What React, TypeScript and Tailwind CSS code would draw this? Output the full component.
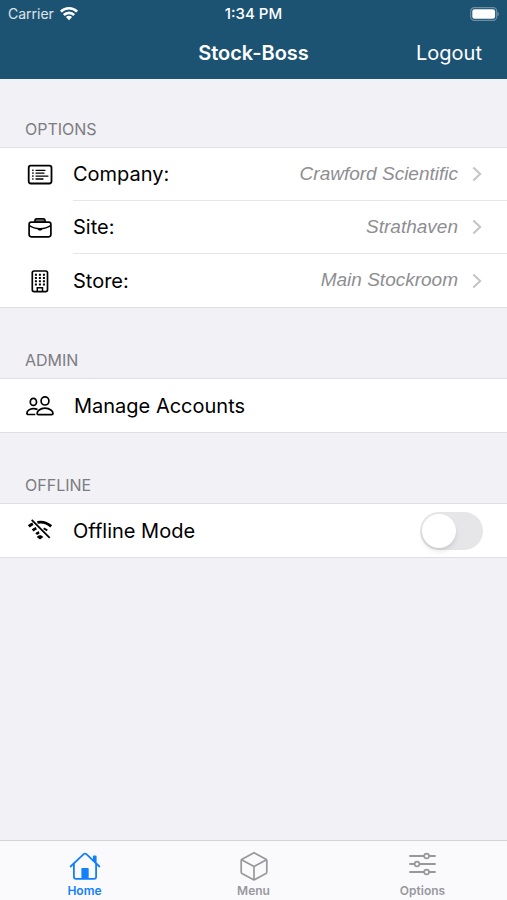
import { useState } from "react";
import type { ReactNode } from "react";

type Tab = "home" | "menu" | "options";

const locationRows = [
  { label: "Company:", value: "Crawford Scientific", icon: <ListIcon /> },
  { label: "Site:", value: "Strathaven", icon: <BriefcaseIcon /> },
  { label: "Store:", value: "Main Stockroom", icon: <BuildingIcon /> },
];

const tabs: { id: Tab; label: string; icon: ReactNode }[] = [
  { id: "home", label: "Home", icon: <HomeIcon /> },
  { id: "menu", label: "Menu", icon: <CubeIcon /> },
  { id: "options", label: "Options", icon: <SlidersIcon /> },
];

function WifiIcon() {
  return (
    <svg viewBox="0 0 18 14" className="w-[18px] h-3.5" fill="none" stroke="#fff" strokeWidth="2.6">
      <path d="M0.9 4.6a11.6 11.6 0 0 1 16.2 0" />
      <path d="M3.8 8a7.4 7.4 0 0 1 10.4 0" />
      <path d="M9 13.2 5.9 10.1a4.5 4.5 0 0 1 6.2 0z" fill="#fff" stroke="none" />
    </svg>
  );
}

function BatteryIcon() {
  return (
    <svg viewBox="0 0 30 14" className="w-[30px] h-3.5" fill="none">
      <rect x="1.7" y="0.7" width="26" height="12.6" rx="3.6" stroke="#fff" strokeOpacity="0.35" strokeWidth="1.2" />
      <rect x="3.3" y="2.3" width="22.8" height="9.4" rx="2.2" fill="#fff" />
      <path d="M28.600 4.900c1.400.5 1.400 3.700 0 4.200z" fill="#fff" fillOpacity="0.45" />
    </svg>
  );
}

function ListIcon() {
  return (
    <svg viewBox="0 0 28 28" className="w-7 h-7" fill="none" stroke="currentColor" strokeLinecap="round">
      <rect x="2.7" y="4.7" width="22.8" height="17.8" rx="2.2" strokeWidth="1.8" />
      <path d="M10 9.3h9M10 12.1h8M10 15.1h12M10 18h7" strokeWidth="1.3" />
      <path d="M6.8 9.3h.2M6.8 12.1h.2M6.8 15.1h.2M6.8 18h.2" strokeWidth="1.6" />
    </svg>
  );
}

function BriefcaseIcon() {
  return (
    <svg viewBox="0 0 28 28" className="w-7 h-7" fill="none" stroke="currentColor" strokeWidth="1.7" strokeLinejoin="round">
      <rect x="3.1" y="8.2" width="21.8" height="14.6" rx="2.2" />
      <path d="M9 8V6.6c0-1 .7-1.7 1.7-1.7h6.6c1 0 1.7.7 1.7 1.7V8" />
      <path d="M9.5 7h9" strokeWidth="1.2" />
      <path d="M3.4 11.6c2.6 1.8 6 3 10.6 3s8-1.2 10.6-3" strokeWidth="1.4" />
      <path d="M11.3 14.3h5.4c-.2 1.4-1.3 2.3-2.7 2.3s-2.5-.9-2.7-2.3z" fill="currentColor" stroke="none" />
    </svg>
  );
}

function BuildingIcon() {
  return (
    <svg viewBox="0 0 28 28" className="w-7 h-7" fill="none" stroke="currentColor">
      <rect x="6.3" y="4" width="15.2" height="20.6" rx="1.8" strokeWidth="1.7" />
      <path
        d="M8.9 7.8h2M12.9 7.8h2M16.9 7.8h2M8.9 11h2M12.9 11h2M16.9 11h2M8.9 14.2h2M12.9 14.2h2M16.9 14.2h2M8.9 17.4h2M12.9 17.4h2M16.9 17.4h2"
        strokeWidth="2"
      />
      <path d="M11.3 24.3v-3.6h5.2v3.6" strokeWidth="1.5" />
    </svg>
  );
}

function PeopleIcon() {
  return (
    <svg viewBox="0 0 28 28" className="w-7 h-7" fill="none" stroke="currentColor" strokeWidth="1.7" strokeLinejoin="round">
      <ellipse cx="19" cy="8.9" rx="3.9" ry="4.1" />
      <path d="M12.5 22.7c-.9 0-1.4-.5-1.4-1.3 0-2.2 2.9-5.2 7.9-5.2s8 3 8 5.2c0 .8-.5 1.3-1.4 1.3z" />
      <ellipse cx="7.4" cy="9.9" rx="3.1" ry="3.5" />
      <path d="M9.3 22.5H2.2c-.9 0-1.3-.5-1.3-1.3 0-2 2.5-4.6 6.5-4.6 1.7 0 3 .4 4.1 1" />
    </svg>
  );
}

function WifiOffIcon() {
  return (
    <svg viewBox="0 0 28 28" className="w-7 h-7" fill="none" stroke="currentColor">
      <path d="M11.4 5.4c5-1 10 .5 13.8 4" strokeWidth="2.8" />
      <path d="M2.8 9.4c1.3-1.2 2.6-2 4.1-2.7" strokeWidth="2.8" />
      <path d="M6.7 13.6c1.1-1.1 2.3-1.9 3.7-2.4" strokeWidth="2.8" />
      <path d="M17.6 11.4c1.4.5 2.500 1.200 3.600 2.200" strokeWidth="2" />
      <path d="M10.2 17.1c.9-.9 1.9-1.4 3-1.6" strokeWidth="2.6" />
      <path d="M14 22.6l-3.200-2.700c1.800-2.200 4.600-2.200 6.400 0z" fill="currentColor" stroke="none" />
      <path d="M5.7 2.800 23.700 20.800" strokeWidth="1.8" />
    </svg>
  );
}

function HomeIcon() {
  return (
    <svg viewBox="0 0 32 30" className="w-8 h-[30px]" fill="none" stroke="currentColor" strokeWidth="1.8" strokeLinecap="round" strokeLinejoin="round">
      <path d="M1.600 15.500 14.700 3.200c.8-.8 1.900-.8 2.700 0l13 12.300" />
      <path d="M4.900 13v12.800c0 1.300.8 2.100 2.100 2.100h18c1.300 0 2.100-.8 2.100-2.100V13" />
      <path d="M24.800 8.500V5.400h1.900v5.500z" fill="currentColor" />
      <path d="M12.400 28V18.300c0-.8.4-1.200 1.200-1.200h4.900c.8 0 1.200.4 1.200 1.200V28z" fill="currentColor" stroke="none" />
    </svg>
  );
}

function CubeIcon() {
  return (
    <svg viewBox="0 0 32 30" className="w-8 h-[30px]" fill="none" stroke="currentColor" strokeWidth="1.7" strokeLinejoin="round">
      <path d="M16 1.700 28 8.200c.5.300.8.700.8 1.300v11.500c0 .6-.3 1.100-.8 1.400L16 28.900 4 22.400c-.5-.3-.8-.8-.8-1.400V9.500c0-.6.3-1 .8-1.300z" />
      <path d="M3.500 8.700 16 15.500l12.500-6.800M16 15.500v13.300" />
    </svg>
  );
}

function SlidersIcon() {
  return (
    <svg viewBox="0 0 32 30" className="w-8 h-[30px]" fill="none" stroke="currentColor" strokeWidth="1.8" strokeLinecap="round">
      <path d="M3 5h14M22 5h6M3 13h4.500M12.500 13H28M3 21h14M22 21h6" />
      <circle cx="19.600" cy="5" r="2.400" strokeWidth="1.600" />
      <circle cx="10" cy="13" r="2.400" strokeWidth="1.600" />
      <circle cx="19.600" cy="21" r="2.400" strokeWidth="1.600" />
    </svg>
  );
}

function Chevron() {
  return (
    <svg viewBox="0 0 10 16" className="w-2.5 h-4 text-[#c4c4c7]" fill="none" stroke="currentColor" strokeWidth="2">
      <path d="M1.300 1.500 8.200 8l-6.900 6.500" />
    </svg>
  );
}

function Section({ title, children }: { title: string; children: ReactNode }) {
  return (
    <section>
      <h2 className="pt-10 pb-2 px-[25px] text-base leading-5 text-[#7c7c81]">{title}</h2>
      <div className="bg-white border-y border-[#dfdfe3]">{children}</div>
    </section>
  );
}

export default function App() {
  const [activeTab, setActiveTab] = useState<Tab>("home");
  const [offline, setOffline] = useState(false);

  return (
    <div className="min-h-screen flex flex-col bg-[#f1f1f6] text-black font-['Inter',sans-serif]">
      <header className="bg-[#1c5373] text-white">
        {/* Status bar */}
        <div className="h-7 grid grid-cols-3 items-center px-2 text-sm">
          <div className="flex items-center gap-1.5 text-white/85">
            Carrier
            <WifiIcon />
          </div>
          <div className="text-center text-[15px] font-medium">1:34 PM</div>
          <div className="flex justify-end">
            <BatteryIcon />
          </div>
        </div>
        <div className="h-[51px] grid grid-cols-3 items-center px-[25px] pb-0.5 text-xl">
          <h1 className="col-start-2 text-center font-semibold whitespace-nowrap">Stock-Boss</h1>
          <button className="justify-self-end">Logout</button>
        </div>
      </header>

      <main className="flex-1 flex flex-col gap-0.5">
        <Section title="OPTIONS">
          {locationRows.map((row, idx) => (
            <button key={row.label} className="w-full h-[53px] flex items-center gap-[19px] pl-[26px] text-left">
              {row.icon}
              <span
                className={`flex-1 h-full flex items-center pr-[25px] ${
                  idx < locationRows.length - 1 ? "border-b border-[#e6e6e9]" : ""
                }`}
              >
                <span className="flex-1 text-xl">{row.label}</span>
                <span className="mr-3.5 font-['Liberation_Sans',sans-serif] text-[19px] italic text-[#8e8e92]">
                  {row.value}
                </span>
                <Chevron />
              </span>
            </button>
          ))}
        </Section>

        <Section title="ADMIN">
          <button className="w-full h-[53px] flex items-center gap-5 px-[26px] text-left text-xl">
            <PeopleIcon />
            Manage Accounts
          </button>
        </Section>

        <Section title="OFFLINE">
          <label className="relative h-[53px] flex items-center gap-[19px] pl-[26px] pr-6 text-xl">
            <WifiOffIcon />
            <span className="flex-1">Offline Mode</span>
            <input
              type="checkbox"
              role="switch"
              checked={offline}
              onChange={(e) => setOffline(e.target.checked)}
              className="peer sr-only"
            />
            <span className="w-[63px] h-[38px] p-0.5 rounded-full bg-[#e6e6e9] transition-colors peer-checked:bg-green-500 peer-checked:[&>span]:translate-x-[25px]">
              <span className="block size-[34px] rounded-full bg-white shadow-md transition-transform" />
            </span>
          </label>
        </Section>
      </main>

      <nav className="h-[60px] grid grid-cols-3 bg-[#fafafd] border-t border-[#d3d3d8]">
        {tabs.map((tab) => (
          <button
            key={tab.id}
            onClick={() => setActiveTab(tab.id)}
            className={`flex flex-col items-center pt-2.5 text-xs leading-5 font-semibold ${
              activeTab === tab.id ? "text-[#1280fa]" : "text-[#98989c]"
            }`}
          >
            {tab.icon}
            {tab.label}
          </button>
        ))}
      </nav>
    </div>
  );
}
